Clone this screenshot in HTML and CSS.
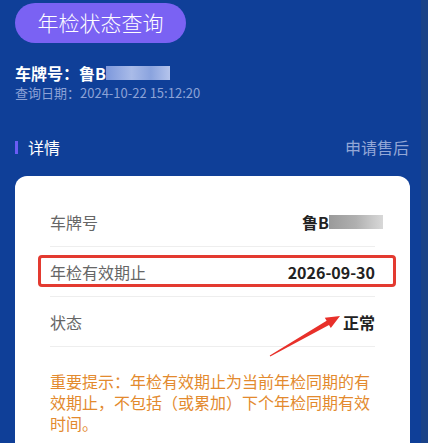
FILE: index.html
```html
<!DOCTYPE html>
<html lang="zh-CN">
<head>
    <meta charset="UTF-8">
    <meta name="viewport" content="width=device-width, initial-scale=1.0">
    <title>年检状态查询</title>

    <link rel="stylesheet" href="styles.css">
</head>
<body>
    <div id="page">
        <div class="title-pill">年检状态查询</div>
        <div class="plate-line">车牌号：鲁B<span class="blur blur-light"></span></div>
        <div class="query-date">查询日期：2024-10-22 15:12:20</div>

        <div class="section-head">
            <span class="section-title">详情</span>
            <span class="section-link">申请售后</span>
        </div>

        <div class="card">
            <div class="row">
                <span class="label">车牌号</span>
                <span class="value">鲁B<span class="blur blur-gray"></span></span>
            </div>
            <div class="row">
                <span class="label">年检有效期止</span>
                <span class="value">2026-09-30</span>
            </div>
            <div class="row">
                <span class="label">状态</span>
                <span class="value">正常</span>
            </div>
            <p class="notice">重要提示：年检有效期止为当前年检同期的有效期止，不包括（或累加）下个年检同期有效时间。</p>

            <div class="mark-box"></div>
            <svg class="mark-arrow" width="80" height="50" viewBox="0 0 80 50">
                <polygon points="4.75,44.6 61.6,9.7 59.8,6.7 75,5 65.8,17.1 64,14.1 5.25,45.4" fill="#e8302a"/>
            </svg>
        </div>
    </div>
</body>
</html>
```

FILE: styles.css
```css
*{
    margin: 0;
    padding: 0;
    box-sizing: border-box;
}
body{
    background-color: #0f3f98;
    font-family: "Noto Sans CJK SC", "Noto Sans", sans-serif;
    height: 443px;
    overflow: hidden;
}
#page{
    height: 443px;
    padding: 3px 0 0 15px;
    border-right: 7px solid #1a4288;
}
.title-pill{
    width: 171px;
    height: 40px;
    line-height: 39px;
    border-radius: 20px;
    background-color: #7a62f3;
    color: #fff;
    font-size: 21px;
    font-weight: 300;
    text-align: center;
}
.plate-line{
    margin-top: 20px;
    color: #fff;
    font-size: 16px;
    font-weight: bold;
    line-height: 20px;
    display: flex;
    align-items: center;
}
.blur{
    display: inline-block;
    height: 14px;
}
.blur-light{
    width: 64px;
    background: linear-gradient(90deg, #7d98dc, #a9bbe8 40%, #8aa3de 70%, #b5c4ec);
}
.blur-gray{
    width: 54px;
    background: linear-gradient(90deg, #9a9a9a, #b0b0b0 50%, #c9c9c9 80%, #d8d8d8);
}
.query-date{
    margin-top: 1px;
    color: #8ca2d6;
    font-size: 13px;
    line-height: 18px;
}
.section-head{
    display: flex;
    justify-content: space-between;
    align-items: center;
    margin-top: 34px;
    padding-right: 12px;
    line-height: 22px;
}
.section-title{
    color: #fff;
    font-size: 16px;
    padding-left: 10px;
    border-left: 3px solid #6a5cf5;
    line-height: 13px;
}
.section-link{
    color: #93a7d6;
    font-size: 16px;
}
.card{
    position: relative;
    margin-top: 18px;
    width: 395px;
    height: 400px;
    background-color: #fff;
    border-radius: 12px;
    padding: 21px 35px 0 35px;
}
.row{
    display: flex;
    justify-content: space-between;
    align-items: center;
    height: 50px;
    border-bottom: 1px solid #eeeeee;
}
.label{
    color: #666;
    font-size: 16px;
}
.value{
    color: #222;
    font-size: 16px;
    font-weight: bold;
    display: flex;
    align-items: center;
}
.value .blur{
    margin-right: -8px;
}
.notice{
    margin-top: 24px;
    color: #e38a2e;
    font-size: 16px;
    line-height: 21px;
}
.mark-box{
    position: absolute;
    left: 23px;
    top: 79px;
    width: 358px;
    height: 32px;
    border: 3px solid #e33a30;
    border-radius: 4px;
}
.mark-arrow{
    position: absolute;
    left: 250px;
    top: 135px;
}
```
